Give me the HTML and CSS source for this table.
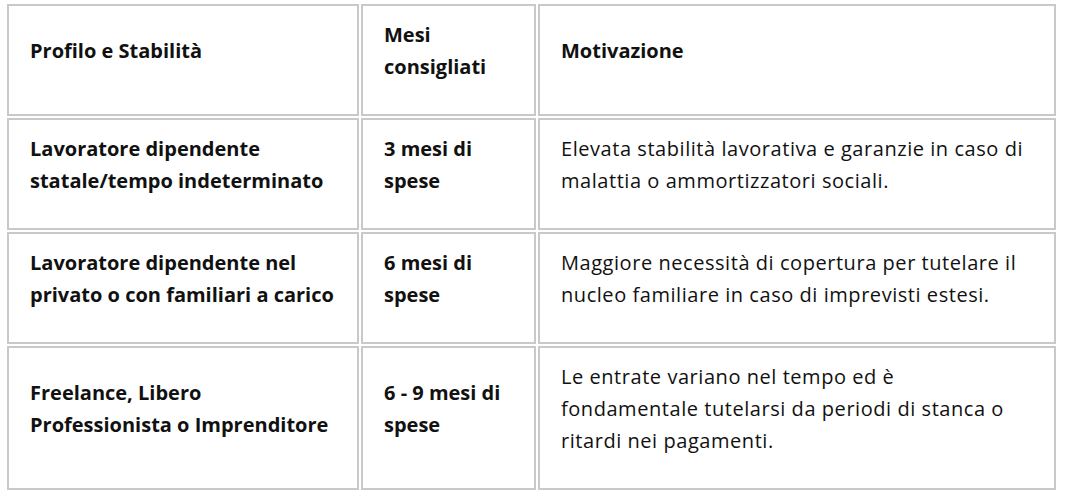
FILE: index.html
```html
<!DOCTYPE html>
<html lang="it">
<head>
<meta charset="utf-8">
<title>Fondo di emergenza</title>
<link rel="stylesheet" href="styles.css">
</head>
<body>
<table class="grid">
  <colgroup>
    <col class="c-profile">
    <col class="c-months">
    <col class="c-reason">
  </colgroup>
  <thead>
    <tr>
      <th>Profilo e Stabilità</th>
      <th>Mesi<br>consigliati</th>
      <th>Motivazione</th>
    </tr>
  </thead>
  <tbody>
    <tr>
      <td class="strong">Lavoratore dipendente<br>statale/tempo indeterminato</td>
      <td class="strong">3 mesi di<br>spese</td>
      <td>Elevata stabilità lavorativa e garanzie in caso di<br>malattia o ammortizzatori sociali.</td>
    </tr>
    <tr>
      <td class="strong">Lavoratore dipendente nel<br>privato o con familiari a carico</td>
      <td class="strong">6 mesi di<br>spese</td>
      <td>Maggiore necessità di copertura per tutelare il<br>nucleo familiare in caso di imprevisti estesi.</td>
    </tr>
    <tr>
      <td class="strong">Freelance, Libero<br>Professionista o Imprenditore</td>
      <td class="strong">6 - 9 mesi di<br>spese</td>
      <td>Le entrate variano nel tempo ed è<br>fondamentale tutelarsi da periodi di stanca o<br>ritardi nei pagamenti.</td>
    </tr>
  </tbody>
</table>
</body>
</html>
```

FILE: styles.css
```css
html, body {
  margin: 0;
  padding: 0;
  background: #ffffff;
}

body {
  font-family: "Open Sans", "Noto Sans", "Liberation Sans", sans-serif;
  color: #111111;
}

.grid {
  margin: 2px 0 0 5px;
  width: 1053px;
  table-layout: fixed;
  border-collapse: separate;
  border-spacing: 2px;
}

.c-profile { width: 352px; }
.c-months { width: 175px; }
.c-reason { width: 518px; }

.grid th,
.grid td {
  border: 2px solid #c9c9c9;
  padding: 13px 8px 31px 21px;
  vertical-align: middle;
  text-align: left;
  font-size: 20px;
  line-height: 32px;
  white-space: nowrap;
  overflow: hidden;
}

.grid th,
.grid td.strong {
  font-weight: 700;
  letter-spacing: 0;
}

.grid td {
  font-weight: 400;
  letter-spacing: 0.55px;
}
```
